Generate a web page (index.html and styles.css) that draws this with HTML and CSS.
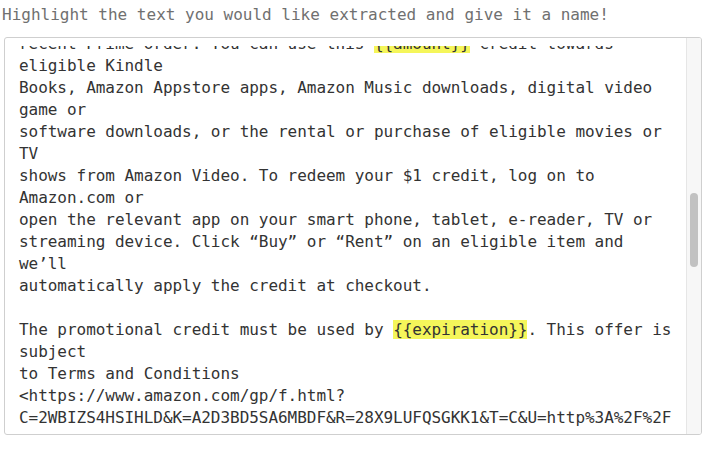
FILE: index.html
```html
<html lang="en">

<head>
    <meta charset="UTF-8">
    <meta name="viewport" content="width=device-width, initial-scale=1.0">
    <title>Extract</title>
    <link rel="stylesheet" href="styles.css">
</head>

<body>
    <p class="prompt">Highlight the text you would like extracted and give it a name!</p>
    <div class="editor">
        <div class="viewport">
            <div class="clip">
<pre class="content">recent Prime order. You can use this <mark>{{amount}}</mark> credit towards
eligible Kindle
Books, Amazon Appstore apps, Amazon Music downloads, digital video
game or
software downloads, or the rental or purchase of eligible movies or
TV
shows from Amazon Video. To redeem your $1 credit, log on to
Amazon.com or
open the relevant app on your smart phone, tablet, e-reader, TV or
streaming device. Click “Buy” or “Rent” on an eligible item and
we’ll
automatically apply the credit at checkout.

The promotional credit must be used by <mark>{{expiration}}</mark>. This offer is
subject
to Terms and Conditions
&lt;https://www.amazon.com/gp/f.html?
C=2WBIZS4HSIHLD&amp;K=A2D3BD5SA6MBDF&amp;R=28X9LUFQSGKK1&amp;T=C&amp;U=http%3A%2F%2F</pre>
            </div>
        </div>
        <div class="scrollbar">
            <div class="thumb"></div>
        </div>
    </div>
</body>

</html>
```

FILE: styles.css
```css
:root {
    --text: #333;
    --muted: #707070;
    --mark: #f5f65a;
    --border: #cfcfcf;
}

* {
    padding: 0;
    margin: 0;
    box-sizing: border-box;
}

body {
    font-family: "DejaVu Sans Mono", "Liberation Mono", monospace;
    font-size: 16px;
    line-height: 22px;
    background-color: #fff;
    color: var(--text);
}

.prompt {
    color: var(--muted);
    margin: 4px 0 0 2px;
    height: 22px;
}

.editor {
    display: flex;
    margin: 11px 0 0 4px;
    width: 698px;
    height: 398px;
    border: 1px solid var(--border);
    border-radius: 3px;
    overflow: hidden;
}

.viewport {
    flex: 1;
    display: flex;
    padding-top: 8px;
}

.clip {
    flex: 1;
    overflow: hidden;
    padding-left: 14px;
}

.content {
    font-family: inherit;
    font-size: 16px;
    line-height: 22px;
    letter-spacing: -0.04px;
    margin-top: -13px;
    white-space: pre;
}

mark {
    background-color: var(--mark);
    color: var(--text);
}

.scrollbar {
    width: 15px;
    background-color: #f7f7f7;
    border-left: 1px solid #e6e6e6;
}

.thumb {
    width: 8px;
    height: 74px;
    margin: 155px 0 0 3px;
    border-radius: 4px;
    background-color: #c2c2c2;
}
```
